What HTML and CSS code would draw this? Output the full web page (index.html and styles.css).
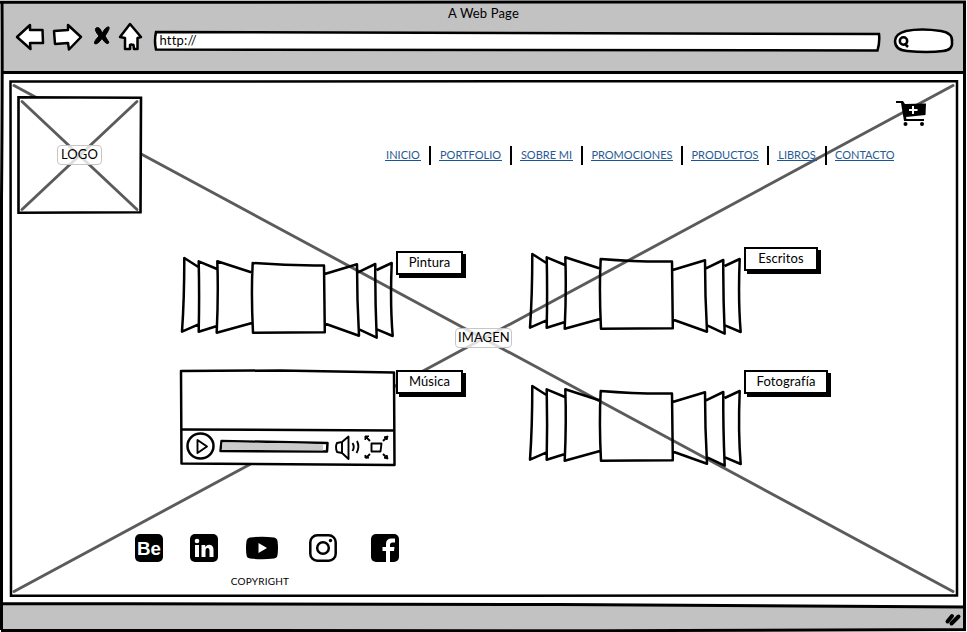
FILE: index.html
```html
<!DOCTYPE html>
<html lang="es">
<head>
<meta charset="utf-8">
<title>A Web Page</title>
<link rel="stylesheet" href="styles.css">
</head>
<body>
<svg class="defs" aria-hidden="true">
  <symbol id="carousel" viewBox="0 0 216 88">
    <path d="M18 12.7L4.3 4Q4.3 45 2 77.700L18 70.700M37 15L18.700 7.300Q19.500 43 18.700 77.700L37 72M72.700 18.700L37.300 7.300Q38.500 40 36.700 78.700L72 69M72.700 9Q110 12 144 11.500L144.800 78.200L73 78.700Q71 40 72.700 9ZM144.700 20L177 10.300Q177 46 179 81.700L144 69.300M178 18.300L195.300 10Q195 45 196.700 83.700L179.700 75.700M196.700 16L211.700 9Q210 50 212.700 82L197 75.300"/>
  </symbol>
</svg>
<div class="window">
  <svg class="backdrop" viewBox="0 0 967 632" aria-hidden="true">
    <path class="chrome" d="M2 2L963 2L963 72H3Z"/>
    <path class="chrome" d="M2 604L600 604.500L963 607V629L2 630Z"/>
    <path class="ink" d="M0 2.200L966 2M2 3Q2.500 90 1.500 200V630M964.500 3V629M2 72.500L965 72.500M2 603.500L560 604.500L965 607M1 630.500L600 630.700L966 629.500"/>
    <path class="ink image-edge" d="M10.500 81.500L957 81.200L957 595.500L11 595.800Z"/>
    <path class="cross" d="M14 85.500L953 591.500M953 85.500L14 591.500"/>
    <path class="grip" d="M947.500 621.500L952 616M951.500 623.500L958.500 616.500"/>
  </svg>

  <header class="browser">
    <div class="title">A Web Page</div>
    <div class="toolbar">
      <svg class="buttons" viewBox="0 0 126 32">
        <path d="M1 16L14 4V9H26.500L27 22H14L14.500 28ZM38 10L52 9V4L65 16L53 28.500L52 22L39 23ZM114 3L125 16L121.500 17V28H118L117.500 24Q115 23 114 24V28H109V17L104 16Z"/>
        <path class="stop" d="M80 7Q84 5 86 12.500Q90 5 93 6Q94 8 89 15L93 21.500Q91 25 86 17.500Q81 24.500 78.500 22.500Q78 20 83 15Q78 9 80 7Z"/>
      </svg>
      <div class="address">
        <svg viewBox="0 0 728 22"><path d="M3 2Q360 2 726 4Q727 12 724.500 20.500Q360 20 3 19.500Q1 11 3 2Z"/></svg>
        <span>http://</span>
      </div>
      <svg class="search" viewBox="0 0 62 26"><path d="M13 3Q28 0 48 3Q60 5 59 14Q60 22 50 23Q35 25 14 23Q2 22 2 13Q2 6 13 3Z"/><circle cx="10.500" cy="13" r="3.700"/><path d="M12 16L15 19"/></svg>
    </div>
  </header>

  <main>
    <div class="top">
      <div class="logo">
        <svg viewBox="0 0 125 118"><path class="box" d="M1.500 1.200L124 1.700L123.500 116.200L1.500 116.700Z"/><path class="cross" d="M5 5.500L120 113.500M120 5.500L5 113.500"/></svg>
        <span class="label">LOGO</span>
      </div>
      <div class="side">
        <svg class="cart" viewBox="0 0 31 26"><path d="M0 0H7L9 3L30 2.500L29.500 14L10 16L10.500 18H28V20H8L7 14L5 2H0Z"/><circle cx="9.500" cy="23" r="2"/><circle cx="26" cy="23" r="2"/><path class="plus" d="M17 5V13M13 9H21.500"/></svg>
        <nav>
          <a class="w35">INICIO</a><i></i><a class="w63">PORTFOLIO</a><i></i><a class="w53">SOBRE MI</a><i></i><a class="w82">PROMOCIONES</a><i></i><a class="w68">PRODUCTOS</a><i></i><a class="w40">LIBROS</a><i></i><a class="w59">CONTACTO</a>
        </nav>
      </div>
    </div>

    <section class="gallery">
      <div class="item painting"><svg class="carousel"><use href="#carousel"/></svg><span class="tag">Pintura</span></div>
      <div class="item writing"><svg class="carousel"><use href="#carousel"/></svg><span class="tag wide">Escritos</span></div>
      <div class="item music">
        <svg class="player" viewBox="0 0 216 100">
          <path class="screen" d="M1 2L100 1.500L214 3.500L214.500 96L1.500 94.500Z"/>
          <path d="M1 60.500L214 61.500"/>
          <ellipse cx="20.500" cy="77" rx="13" ry="12.500"/>
          <path class="thin" d="M17.500 71V84L27 77.500Z"/>
          <path class="screen" d="M41.500 72L147.500 74L147 82.500L40.500 82Z"/>
          <path class="track" d="M42.500 73.200L143 75V81.400L41.700 80.900Z"/>
          <path class="thin" d="M157 74L162 73L168.500 67.500V90L162 84L157 83Q155 78 157 74ZM162 73V84M172.500 74Q175 78 172.500 82M177 72Q180 78 176.500 84M191.500 74.500H201.500L200.500 82.500H191.500ZM190 72L186 68M203 72L207 68M190 85L186 89M203 85L207 89"/>
          <path class="heads" d="M185 67H189L185 71ZM204 68L208 67L207 71ZM185 86V89H189ZM204 89L207 86L208 90Z"/>
        </svg>
        <span class="tag">Música</span>
      </div>
      <div class="item photo"><svg class="carousel"><use href="#carousel"/></svg><span class="tag widest">Fotografía</span></div>
    </section>

    <footer>
      <div class="social">
        <svg viewBox="0 0 28 28"><rect width="28" height="28" rx="5"/><text x="14" y="20.500" textLength="24" lengthAdjust="spacingAndGlyphs">Be</text></svg>
        <svg viewBox="0 0 28 28"><rect width="28" height="28" rx="5"/><g class="white"><circle cx="7" cy="7" r="2.300"/><path d="M5 11H9V23H5ZM11.500 11H15.200V13Q17 10.500 19.500 10.700Q23.500 11 23.500 16V23H19.500V17Q19.500 14 17.500 14Q15.500 14 15.500 17V23H11.500Z"/></g></svg>
        <svg class="tube" viewBox="0 0 32 28"><path d="M4 3.500Q16 2 28 3.500Q31 4 31.500 7Q32.500 14 31.500 21Q31 24 28 24.500Q16 26 4 24.500Q1 24 .5 21Q-.5 14 .5 7Q1 4 4 3.500Z"/><path class="white" d="M12.500 9V19L21 14Z"/></svg>
        <svg viewBox="0 0 28 28"><g class="outline"><rect x="1.300" y="1.300" width="25.400" height="25.400" rx="7"/><circle cx="14" cy="14" r="5.800"/></g><circle cx="21.500" cy="6.500" r="1.700"/></svg>
        <svg viewBox="0 0 28 28"><rect width="28" height="28" rx="5"/><path class="white" d="M15 28V17H11.500V13H15V10Q15 4.500 20.500 4.500H24V8.500H21.500Q19 8.500 19 11V13H23.500L23 17H19V28Z"/></svg>
      </div>
      <p>COPYRIGHT</p>
    </footer>
    <span class="label image-label">IMAGEN</span>
  </main>
</div>
</body>
</html>
```
FILE: styles.css
```css
* { box-sizing: border-box; }
body { margin: 0; background: #fff; font-family: Lato, "Open Sans", sans-serif; font-size: 13px; color: #000; }
svg { display: block; overflow: visible; flex: none; }
.defs { position: absolute; width: 0; height: 0; }
.window { position: relative; width: 967px; height: 632px; overflow: hidden; }
.backdrop { position: absolute; inset: 0; width: 967px; height: 632px; }
.chrome { fill: #c2c2c2; }
.ink { fill: none; stroke: #000; stroke-width: 3; }
.image-edge { stroke-width: 2.5; }
.cross { fill: none; stroke: #5b5b5b; stroke-width: 2.9; stroke-linecap: round; }
.grip { stroke: #000; stroke-width: 4; stroke-linecap: round; }

.browser { position: relative; height: 74px; padding-top: 5px; }
.title { height: 17px; line-height: 17px; text-align: center; letter-spacing: .15px; }
.toolbar { display: flex; align-items: flex-start; padding-left: 16px; }
.buttons { width: 126px; height: 32px; fill: #fff; stroke: #000; stroke-width: 2.5; stroke-linejoin: round; margin-top: -1px; margin-left: -.5px; }
.buttons .stop { fill: #000; stroke-width: 1; }
.address { display: grid; width: 728px; height: 22px; margin: 8px 0 0 11px; }
.address > * { grid-area: 1 / 1; }
.address svg { width: 728px; height: 22px; fill: #fff; stroke: #000; stroke-width: 2.5; }
.address span { position: relative; padding-left: 7px; line-height: 20px; letter-spacing: .2px; }
.search { width: 62px; height: 26px; margin: 6px 0 0 12.5px; fill: #fff; stroke: #000; stroke-width: 2.5; }

main { position: relative; height: 530px; padding-top: 22px; }
.top { display: flex; height: 150px; padding-left: 17px; }
.logo { display: grid; place-items: center; width: 125px; height: 118px; }
.logo > * { grid-area: 1 / 1; }
.logo svg { width: 125px; height: 118px; }
.box { fill: #fff; stroke: #000; stroke-width: 2.6; }
.label { z-index: 1; display: block; height: 20px; padding: 0 2px; border: 1px solid #c6c6c6; border-radius: 4px; background: rgba(255,255,255,.8); line-height: 17px; text-align: center; letter-spacing: .1px; }
.logo .label { width: 45px; }
.side { width: 509px; margin-left: 243px; padding-top: 5px; }
.cart { width: 31px; height: 26px; margin-left: 511px; }
.plus { stroke: #fff; stroke-width: 2; }
nav { display: flex; align-items: center; height: 20px; margin-top: 18px; gap: 8px; }
nav a { height: 12px; border-bottom: 1px solid #175595; color: #285b92; font-size: 11px; line-height: 12px; text-align: center; white-space: nowrap; flex: none; }
nav i { width: 2px; height: 19px; background: #000; flex: none; }
.w35 { width: 36px; } .w63 { width: 63px; } .w53 { width: 53px; } .w82 { width: 82px; } .w68 { width: 68px; } .w40 { width: 40px; } .w59 { width: 59px; }

.gallery { display: grid; grid-template-columns: 348px 348px; grid-template-rows: 123px 110px; padding-left: 180px; }
.item { display: flex; align-items: flex-start; }
.carousel, .player { width: 216px; height: 88px; fill: none; stroke: #000; stroke-width: 2.5; stroke-linejoin: round; }
.carousel { margin-left: -.5px; margin-right: .5px; }
.player { height: 100px; }
.player .screen { fill: #fff; }
.track { fill: #cacaca; stroke: none; }
.thin { stroke-width: 1.9; }
.heads { fill: #000; stroke-width: 1; }
.tag { width: 67px; height: 24px; margin: 1px 0 0; border: 2px solid #000; background: #fff; box-shadow: 3px 3px 0 #000; line-height: 19px; text-align: center; letter-spacing: .1px; }
.wide { width: 74px; }
.widest { width: 84px; }
.painting { padding-top: 4px; }
.painting .carousel, .writing .carousel { margin-top: 4px; }
.photo .carousel { margin-top: 13px; }

footer { padding: 55px 0 0 135px; }
.social { display: flex; gap: 27px; }
.social svg { width: 28px; height: 28px; }
.social .tube { width: 32px; margin: 0 4px 0 1px; }
.social svg:last-child { margin-left: 7px; }
.social text { fill: #fff; font: bold 18px "Liberation Sans", sans-serif; text-anchor: middle; }
.white { fill: #fff; }
.outline { fill: none; stroke: #000; stroke-width: 2.5; }
footer p { width: 60px; margin: 13px 0 0 95px; font-size: 10px; line-height: 13px; text-align: center; letter-spacing: .2px; }
.image-label { position: absolute; left: 455px; top: 254px; width: 57px; }
```
